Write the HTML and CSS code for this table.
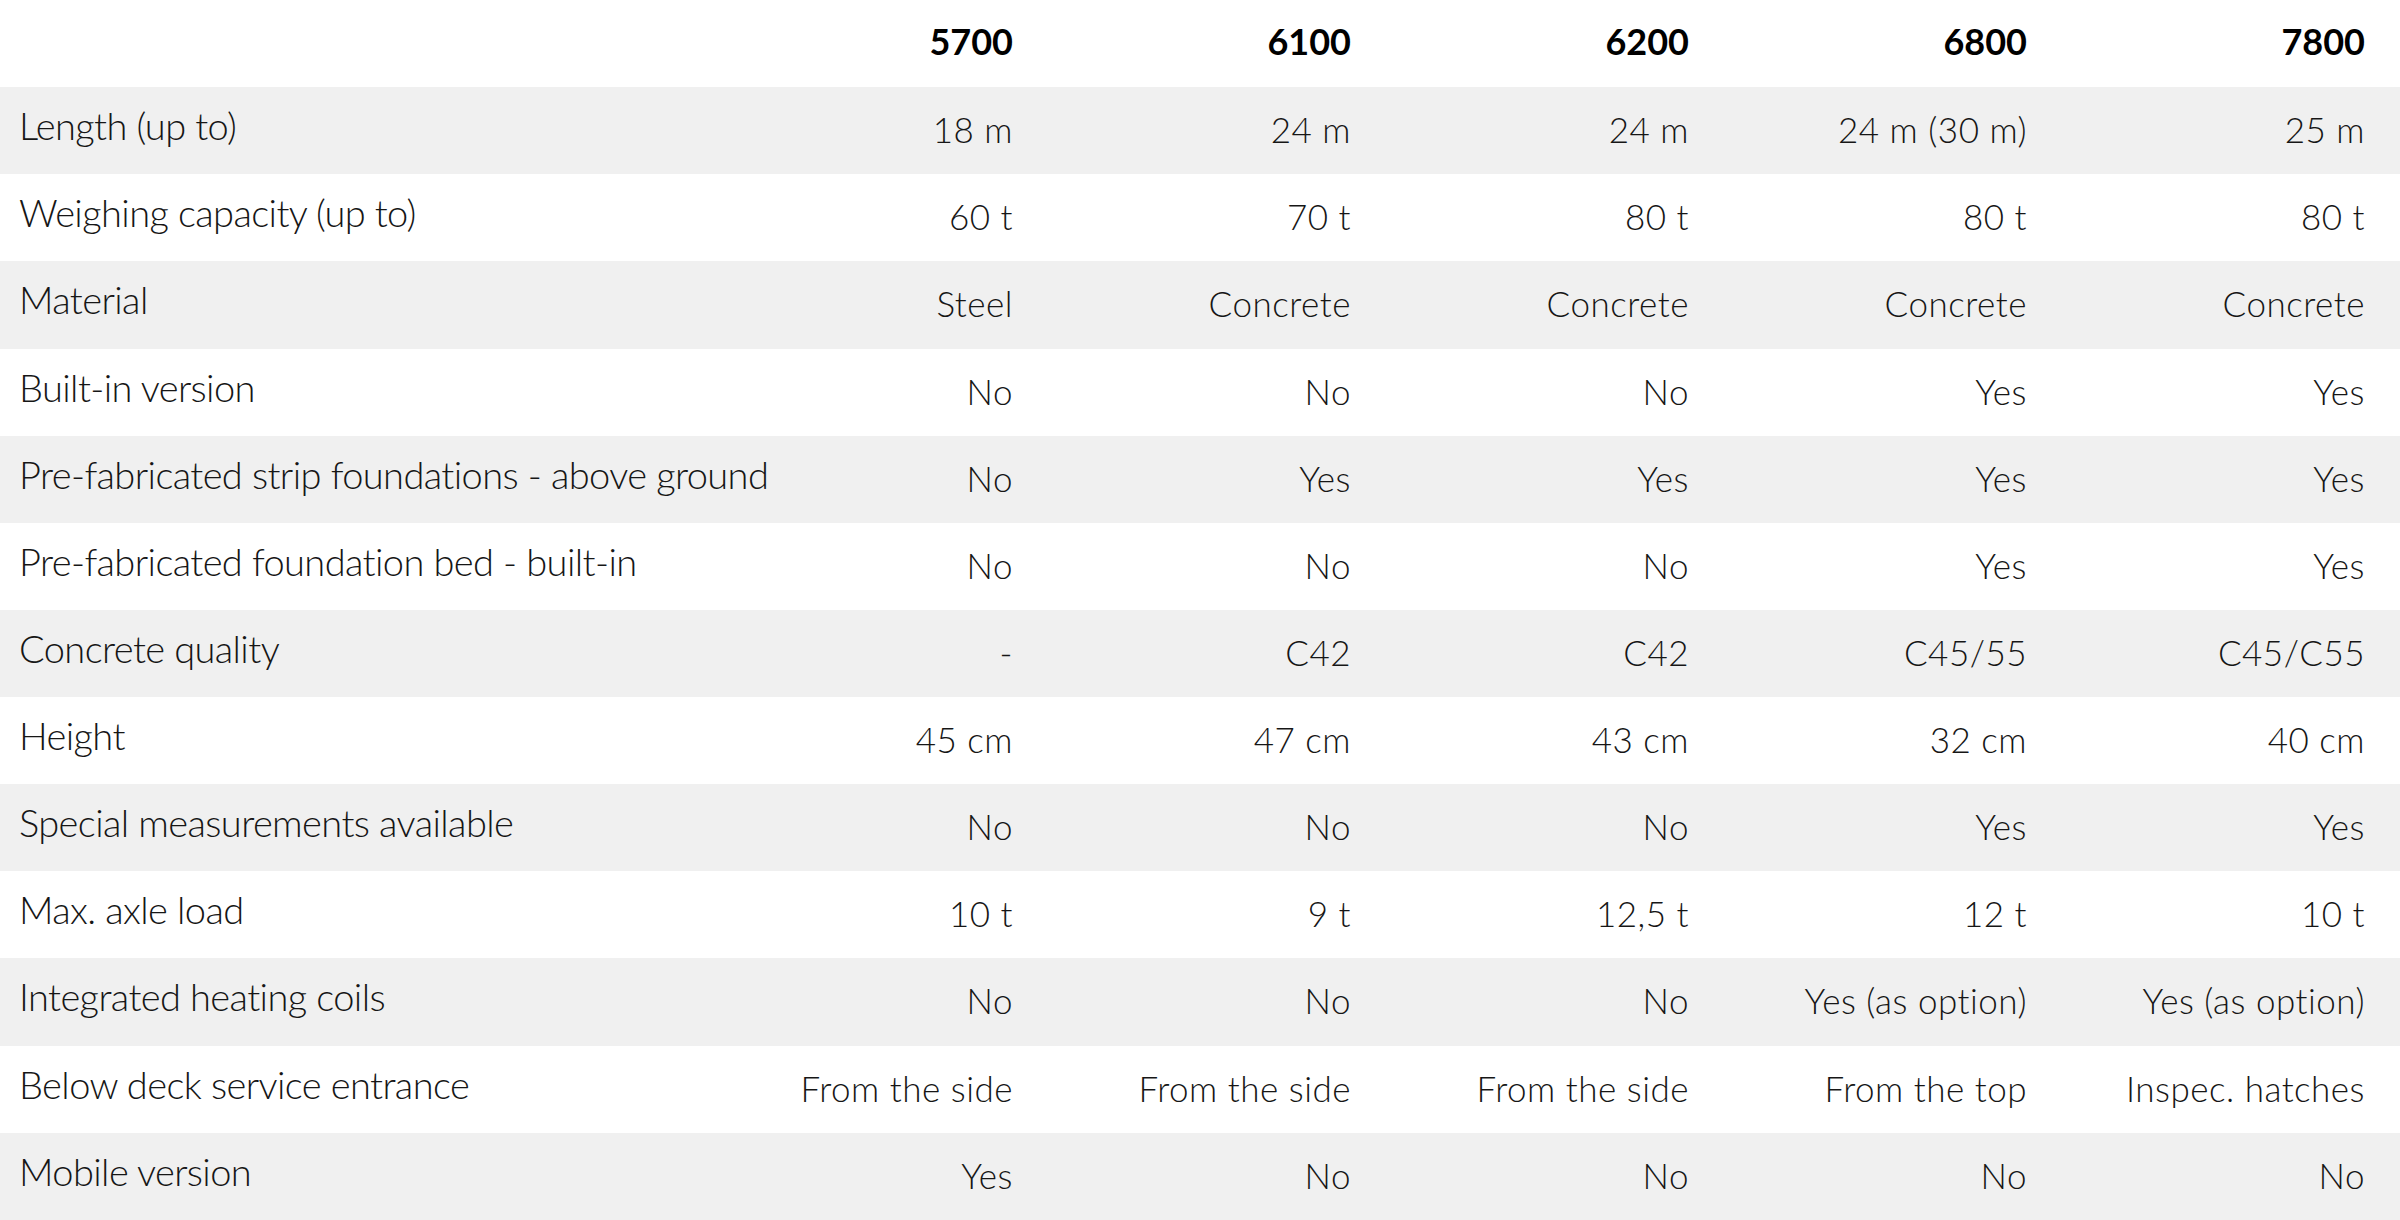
FILE: index.html
```html
<!DOCTYPE html>
<html lang="en">
<head>
<meta charset="utf-8">
<title>Comparison</title>
<link rel="stylesheet" href="styles.css">
</head>
<body>
<table class="spec">
  <colgroup>
    <col class="c-label">
    <col class="c-val">
    <col class="c-val">
    <col class="c-val">
    <col class="c-val">
    <col class="c-last">
  </colgroup>
  <thead>
    <tr class="head">
      <th class="label"></th>
      <th>5700</th><th>6100</th><th>6200</th><th>6800</th><th class="last">7800</th>
    </tr>
  </thead>
  <tbody>
    <tr class="alt"><td class="label">Length (up to)</td><td>18 m</td><td>24 m</td><td>24 m</td><td>24 m (30 m)</td><td class="last">25 m</td></tr>
    <tr><td class="label">Weighing capacity (up to)</td><td>60 t</td><td>70 t</td><td>80 t</td><td>80 t</td><td class="last">80 t</td></tr>
    <tr class="alt"><td class="label">Material</td><td>Steel</td><td>Concrete</td><td>Concrete</td><td>Concrete</td><td class="last">Concrete</td></tr>
    <tr><td class="label">Built-in version</td><td>No</td><td>No</td><td>No</td><td>Yes</td><td class="last">Yes</td></tr>
    <tr class="alt"><td class="label">Pre-fabricated strip foundations - above ground</td><td>No</td><td>Yes</td><td>Yes</td><td>Yes</td><td class="last">Yes</td></tr>
    <tr><td class="label">Pre-fabricated foundation bed - built-in</td><td>No</td><td>No</td><td>No</td><td>Yes</td><td class="last">Yes</td></tr>
    <tr class="alt"><td class="label">Concrete quality</td><td>-</td><td>C42</td><td>C42</td><td>C45/55</td><td class="last">C45/C55</td></tr>
    <tr><td class="label">Height</td><td>45 cm</td><td>47 cm</td><td>43 cm</td><td>32 cm</td><td class="last">40 cm</td></tr>
    <tr class="alt"><td class="label">Special measurements available</td><td>No</td><td>No</td><td>No</td><td>Yes</td><td class="last">Yes</td></tr>
    <tr><td class="label">Max. axle load</td><td>10 t</td><td>9 t</td><td>12,5 t</td><td>12 t</td><td class="last">10 t</td></tr>
    <tr class="alt"><td class="label">Integrated heating coils</td><td>No</td><td>No</td><td>No</td><td>Yes (as option)</td><td class="last">Yes (as option)</td></tr>
    <tr><td class="label">Below deck service entrance</td><td>From the side</td><td>From the side</td><td>From the side</td><td>From the top</td><td class="last">Inspec. hatches</td></tr>
    <tr class="alt"><td class="label">Mobile version</td><td>Yes</td><td>No</td><td>No</td><td>No</td><td class="last">No</td></tr>
  </tbody>
</table>
</body>
</html>
```

FILE: styles.css
```css
html, body {
  margin: 0;
  padding: 0;
  background: #ffffff;
}

body {
  font-family: "Lato", "Open Sans", "Liberation Sans", sans-serif;
  color: #161616;
}

.spec {
  width: 2400px;
  border-collapse: collapse;
  border-spacing: 0;
  table-layout: fixed;
}

.c-val { width: 338px; }
.c-last { width: 373px; }

.spec tr {
  height: 87.14px;
}

.spec th,
.spec td {
  padding: 0 0 3px 0;
  text-align: right;
  vertical-align: middle;
  white-space: nowrap;
  font-size: 35px;
  font-weight: 300;
  letter-spacing: 0.5px;
}

.spec th {
  font-weight: 700;
  font-size: 36px;
  color: #000;
  letter-spacing: 0;
  padding-bottom: 5px;
}

.spec .last {
  padding-right: 35px;
}

.spec .label {
  text-align: left;
  padding-left: 19px;
  padding-bottom: 11px;
  font-size: 38px;
  letter-spacing: -0.6px;
  overflow: visible;
}

.spec tr.alt {
  background: #f0f0f0;
}
```
